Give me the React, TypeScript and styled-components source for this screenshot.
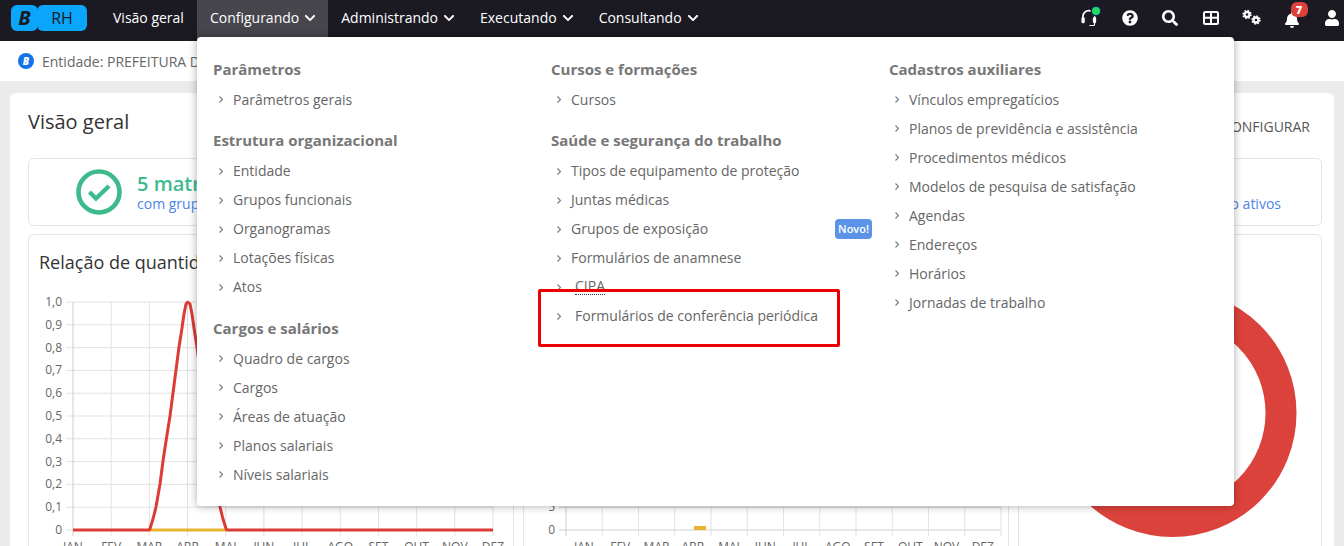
import React from 'react';
import styled, { createGlobalStyle } from 'styled-components';
import { FaBell, FaChevronDown, FaQuestionCircle, FaSearch, FaUser } from 'react-icons/fa';

const GlobalStyle = createGlobalStyle`
  html, body {
    margin: 0;
    height: 546px;
    overflow: hidden;
    background: #ebebeb;
    font-family: 'Open Sans', sans-serif;
  }
`;

const TopBar = styled.header`
  height: 41px;
  background: #1b1a23;
  display: flex;
  align-items: stretch;
  padding: 0 4px 0 11px;
`;

const Logo = styled.div`
  display: flex;
  align-items: center;
  height: 26px;
  margin: 5px 13px 0 0;
`;

const LogoMark = styled.span`
  width: 27px;
  height: 26px;
  margin-right: -1px;
  border-radius: 6px;
  background: #0aa6fb;
  color: #1b1a23;
  font-size: 20px;
  font-weight: 700;
  font-style: italic;
  line-height: 26px;
  text-align: center;
`;

const LogoName = styled.span`
  width: 50px;
  height: 26px;
  border-radius: 6px;
  background: #0aa6fb;
  color: #1b1a23;
  font-size: 16px;
  line-height: 26px;
  text-align: center;
`;

const NavItem = styled.a<{ $active?: boolean }>`
  display: flex;
  align-items: center;
  gap: 5px;
  padding: 0 13px 6px;
  color: #fff;
  font-size: 14px;
  background: ${(p) => (p.$active ? '#47464c' : 'transparent')};
  white-space: nowrap;

  svg {
    font-size: 12px;
    margin-right: -1px;
  }
`;

const IconRow = styled.div`
  margin-left: auto;
  padding-bottom: 6px;
  display: flex;
  align-items: center;
  gap: 24.5px;
`;

const IconCell = styled.span<{ $drop?: boolean }>`
  position: relative;
  top: ${(p) => (p.$drop ? '2px' : '0')};
  width: 16px;
  height: 18px;
  display: flex;
  align-items: center;
  justify-content: center;
  color: #fff;
  font-size: 16px;
`;

const OnlineDot = styled.span`
  position: absolute;
  top: -2px;
  right: -3px;
  width: 8px;
  height: 8px;
  border-radius: 50%;
  background: #22d866;
  box-shadow: 0 0 0 1.5px #16264f;
`;

const CountBadge = styled.span`
  position: absolute;
  top: -9px;
  left: 7px;
  width: 17px;
  height: 15px;
  border-radius: 6px;
  background: #dc403a;
  color: #fff;
  font-size: 11px;
  font-weight: 800;
  line-height: 15px;
  text-align: center;
`;

const EntityBar = styled.div`
  height: 40px;
  background: #fff;
  display: flex;
  align-items: center;
  gap: 8px;
  padding-left: 18px;
  color: #666;
  font-size: 14px;
`;

const EntityMark = styled.span`
  width: 16px;
  height: 16px;
  border-radius: 50%;
  background: #1273eb;
  color: #fff;
  font-size: 10px;
  font-weight: 800;
  font-style: italic;
  line-height: 16px;
  text-align: center;
`;

const Content = styled.main`
  padding: 12px 10px 0;
`;

const Card = styled.section`
  background: #fff;
  border-radius: 6px 6px 0 0;
  padding: 0 12px 0 18px;
  height: 460px;
`;

const TitleRow = styled.div`
  height: 50px;
  padding-top: 15px;
  display: flex;
  justify-content: space-between;
  align-items: flex-start;
`;

const PageTitle = styled.h1`
  margin: 0;
  color: #333;
  font-size: 20px;
  font-weight: 400;
  line-height: 28px;
`;

const ConfigureButton = styled.span`
  margin-top: 9px;
  padding-right: 12px;
  color: #555;
  font-size: 14px;
  line-height: 20px;
`;

const StatusCard = styled.div`
  height: 68px;
  box-sizing: border-box;
  border: 1px solid #e5e5e5;
  border-radius: 6px;
  display: flex;
  align-items: center;
  gap: 15px;
  padding: 0 40px 0 47px;
`;

const StatusText = styled.div`
  display: flex;
  flex-direction: column;
`;

const StatusCount = styled.strong`
  color: #3dbb8d;
  font-size: 20px;
  font-weight: 600;
  line-height: 22px;
`;

const BlueLink = styled.a<{ $push?: boolean }>`
  color: #4a86e8;
  font-size: 14px;
  line-height: 17px;
  margin-left: ${(p) => (p.$push ? 'auto' : '0')};
  margin-top: ${(p) => (p.$push ? '22px' : '0')};
`;

const PanelGrid = styled.div`
  margin-top: 8px;
  display: grid;
  grid-template-columns: 486px 486px 304px;
  gap: 9px;
`;

const Panel = styled.div`
  height: 340px;
  box-sizing: border-box;
  border: 1px solid #e5e5e5;
  border-radius: 6px;
  overflow: hidden;
`;

const PanelTitle = styled.h2`
  margin: 0;
  height: 50px;
  padding: 15px 0 0 10px;
  box-sizing: border-box;
  color: #333;
  font-size: 18px;
  font-weight: 400;
  line-height: 24px;
  white-space: nowrap;
`;

const ChartSvg = styled.svg`
  display: block;
  width: 100%;
  height: 270px;

  text {
    fill: #666;
    font-family: 'Open Sans', sans-serif;
    font-size: 12px;
  }
`;

const Menu = styled.nav`
  position: absolute;
  top: 37px;
  left: 197px;
  width: 1037px;
  height: 469px;
  box-sizing: border-box;
  padding-top: 5.7px;
  background: #fff;
  border-radius: 4px;
  box-shadow: 0 0 8px rgba(0, 0, 0, 0.35);
  display: grid;
  grid-template-columns: 338px 338px 338px;
  align-content: start;
`;

const MenuColumn = styled.div`
  padding: 0 1px 0 16px;
`;

const MenuHeading = styled.h3`
  margin: 11.3px 0 0;
  color: #777;
  font-size: 15px;
  font-weight: 700;
  line-height: 31px;
  white-space: nowrap;
`;

const MenuItem = styled.a`
  height: 29px;
  display: flex;
  align-items: center;
  color: #666;
  font-size: 14px;
  white-space: nowrap;
`;

const Chevron = styled.svg`
  flex: none;
  width: 4px;
  height: 7px;
  margin: 1px 10px 0 6px;
  fill: none;
  stroke: #777;
  stroke-width: 1.1;
`;

const Inset = styled.span<{ $dotted?: boolean }>`
  margin-left: 4px;
  ${(p) => (p.$dotted ? 'border-bottom: 1px dotted #333; line-height: 16px;' : '')}
`;

const NewBadge = styled.span`
  margin-left: auto;
  width: 37px;
  height: 20px;
  border-radius: 4px;
  background: #5b93e6;
  color: #fff;
  font-size: 11px;
  font-weight: 600;
  line-height: 20px;
  text-align: center;
`;

const Highlight = styled.div`
  position: absolute;
  left: 341px;
  top: 252px;
  width: 302px;
  height: 58px;
  box-sizing: border-box;
  border: 3px solid #ee0000;
  border-radius: 2px;
`;

const months = ['JAN', 'FEV', 'MAR', 'ABR', 'MAI', 'JUN', 'JUL', 'AGO', 'SET', 'OUT', 'NOV', 'DEZ'];
const ticks = ['0', '0,1', '0,2', '0,3', '0,4', '0,5', '0,6', '0,7', '0,8', '0,9', '1,0'];

// left half of the april peak, the right half is mirrored
const rise: [number, number][] = [
  [149.5, 530], [153, 519], [156, 507], [160, 484], [163, 461], [166.5, 438], [170, 416],
  [173, 393], [176, 370], [179, 347], [181.7, 330], [184, 314], [186, 304], [187.8, 302],
];
const peak = [...rise, ...[...rise].reverse().slice(1).map(([x, y]) => [375.6 - x + 0.4, y])]
  .map((p) => p.join(','))
  .join(' ');

const menuColumns = [
  [
    { title: 'Parâmetros', items: ['Parâmetros gerais'] },
    { title: 'Estrutura organizacional', items: ['Entidade', 'Grupos funcionais', 'Organogramas', 'Lotações físicas', 'Atos'] },
    { title: 'Cargos e salários', items: ['Quadro de cargos', 'Cargos', 'Áreas de atuação', 'Planos salariais', 'Níveis salariais'] },
  ],
  [
    { title: 'Cursos e formações', items: ['Cursos'] },
    {
      title: 'Saúde e segurança do trabalho',
      items: ['Tipos de equipamento de proteção', 'Juntas médicas', 'Grupos de exposição', 'Formulários de anamnese', 'CIPA', 'Formulários de conferência periódica'],
    },
  ],
  [
    {
      title: 'Cadastros auxiliares',
      items: ['Vínculos empregatícios', 'Planos de previdência e assistência', 'Procedimentos médicos', 'Modelos de pesquisa de satisfação', 'Agendas', 'Endereços', 'Horários', 'Jornadas de trabalho'],
    },
  ],
];

const LineChart = () => (
  <ChartSvg viewBox="29 285 484 270">
    {ticks.map((t, i) => {
      const y = 530 - i * 22.8;
      return (
        <g key={t}>
          <line x1="66" x2="493" y1={y} y2={y} stroke="#e2e2e2" />
          <text x="62" y={y + 4} textAnchor="end">{t}</text>
        </g>
      );
    })}
    {months.map((m, i) => {
      const x = 73 + i * 38.18;
      return (
        <g key={m}>
          <line x1={x} x2={x} y1="302" y2="536" stroke={i === 0 ? '#cfcfcf' : '#e2e2e2'} />
          <text x={x} y="551" textAnchor="middle">{m}</text>
        </g>
      );
    })}
    <line x1="150" x2="226" y1="530" y2="530" stroke="#e8b32e" strokeWidth="3" />
    <line x1="73" x2="150" y1="530" y2="530" stroke="#dd3c35" strokeWidth="3" />
    <line x1="226" x2="493" y1="530" y2="530" stroke="#dd3c35" strokeWidth="3" />
    <polyline points={peak} fill="none" stroke="#dd3c35" strokeWidth="3" strokeLinejoin="round" />
  </ChartSvg>
);

const BarChart = () => (
  <ChartSvg viewBox="524 285 484 270">
    {[0, 5, 10, 15, 20, 25].map((t, i) => {
      const y = 530 - i * 22.8;
      return (
        <g key={t}>
          <line x1="559" x2="1001" y1={y} y2={y} stroke={i < 2 ? '#cfcfcf' : '#e2e2e2'} />
          <text x="555" y={y + 4} textAnchor="end">{t}</text>
        </g>
      );
    })}
    {[...months, ''].map((m, i) => {
      const x = 566 + i * 36.25;
      return (
        <g key={i}>
          <line x1={x} x2={x} y1="302" y2="536" stroke={i === 0 ? '#cfcfcf' : '#e2e2e2'} />
          {m && <text x={x + 18} y="551" textAnchor="middle">{m}</text>}
        </g>
      );
    })}
    <rect x="694" y="526" width="12" height="4" fill="#e8b32e" />
  </ChartSvg>
);

const DonutChart = () => (
  <ChartSvg viewBox="1019 285 302 270">
    <circle cx="1172.5" cy="413" r="108.5" fill="none" stroke="#dc423c" strokeWidth="31" />
  </ChartSvg>
);

const HeadsetIcon = () => (
  <svg width="17" height="18" viewBox="0 0 17 18" fill="none" stroke="#fff">
    <path d="M2 10V7.5a6.3 6.3 0 0 1 12.6 0V10" strokeWidth="1.8" />
    <rect x="0.5" y="8" width="3.5" height="6.5" rx="1.6" fill="#fff" stroke="none" />
    <rect x="12.6" y="8" width="3.5" height="6.5" rx="1.6" fill="#fff" stroke="none" />
    <path d="M14.4 14v2a1 1 0 0 1-1 1H9" strokeWidth="1.2" />
  </svg>
);

const PanesIcon = () => (
  <svg width="16" height="14" viewBox="0 0 16 14" fill="none" stroke="#fff">
    <rect x="1" y="1" width="14" height="12" rx="1.5" strokeWidth="2" />
    <path d="M1 6.8h14M8 1v12" strokeWidth="2" />
  </svg>
);

const Gear = ({ cx, cy }: { cx: number; cy: number }) => (
  <g fill="none" stroke="#fff">
    <circle cx={cx} cy={cy} r="2.5" strokeWidth="2.3" />
    <circle cx={cx} cy={cy} r="3.9" strokeWidth="1.6" strokeDasharray="1.53 1.53" />
  </g>
);

const GearsIcon = () => (
  <svg width="20" height="17" viewBox="0 0 20 17" style={{ flex: 'none' }}>
    <Gear cx={6} cy={5.5} />
    <Gear cx={15} cy={11} />
  </svg>
);

export default function App() {
  return (
    <>
      <GlobalStyle />
      <TopBar>
        <Logo>
          <LogoMark>B</LogoMark>
          <LogoName>RH</LogoName>
        </Logo>
        <NavItem>Visão geral</NavItem>
        <NavItem $active>Configurando <FaChevronDown /></NavItem>
        <NavItem>Administrando <FaChevronDown /></NavItem>
        <NavItem>Executando <FaChevronDown /></NavItem>
        <NavItem>Consultando <FaChevronDown /></NavItem>
        <IconRow>
          <IconCell><HeadsetIcon /><OnlineDot /></IconCell>
          <IconCell><FaQuestionCircle /></IconCell>
          <IconCell><FaSearch /></IconCell>
          <IconCell><PanesIcon /></IconCell>
          <IconCell><GearsIcon /></IconCell>
          <IconCell $drop><FaBell /><CountBadge>7</CountBadge></IconCell>
          <IconCell><FaUser /></IconCell>
        </IconRow>
      </TopBar>
      <EntityBar>
        <EntityMark>B</EntityMark>
        Entidade: PREFEITURA DE SÃO JOSÉ
      </EntityBar>
      <Content>
        <Card>
          <TitleRow>
            <PageTitle>Visão geral</PageTitle>
            <ConfigureButton>CONFIGURAR</ConfigureButton>
          </TitleRow>
          <StatusCard>
            <svg width="46" height="46" viewBox="0 0 46 46" fill="none" stroke="#3dbb8d">
              <circle cx="23" cy="23" r="20.5" strokeWidth="4.6" />
              <path d="M13.5 23l6.5 6.5 13-12.5" strokeWidth="4.4" />
            </svg>
            <StatusText>
              <StatusCount>5 matrículas</StatusCount>
              <BlueLink>com grupo funcional definido</BlueLink>
            </StatusText>
            <BlueLink $push>Ver somente o ativos</BlueLink>
          </StatusCard>
          <PanelGrid>
            <Panel>
              <PanelTitle>Relação de quantidade de matrículas</PanelTitle>
              <LineChart />
            </Panel>
            <Panel>
              <PanelTitle>Relação de afastamentos</PanelTitle>
              <BarChart />
            </Panel>
            <Panel>
              <PanelTitle>Situação</PanelTitle>
              <DonutChart />
            </Panel>
          </PanelGrid>
        </Card>
      </Content>
      <Menu>
        {menuColumns.map((groups, c) => (
          <MenuColumn key={c}>
            {groups.map((group) => (
              <div key={group.title}>
                <MenuHeading>{group.title}</MenuHeading>
                {group.items.map((item) => {
                  const inset = item === 'CIPA' || item.includes('conferência');
                  return (
                    <MenuItem key={item}>
                      <Chevron viewBox="0 0 4 7"><path d="M0.5 0.5L3.5 3.5L0.5 6.5" /></Chevron>
                      {inset ? <Inset $dotted={item === 'CIPA'}>{item}</Inset> : item}
                      {item === 'Grupos de exposição' && <NewBadge>Novo!</NewBadge>}
                    </MenuItem>
                  );
                })}
              </div>
            ))}
          </MenuColumn>
        ))}
        <Highlight />
      </Menu>
    </>
  );
}
